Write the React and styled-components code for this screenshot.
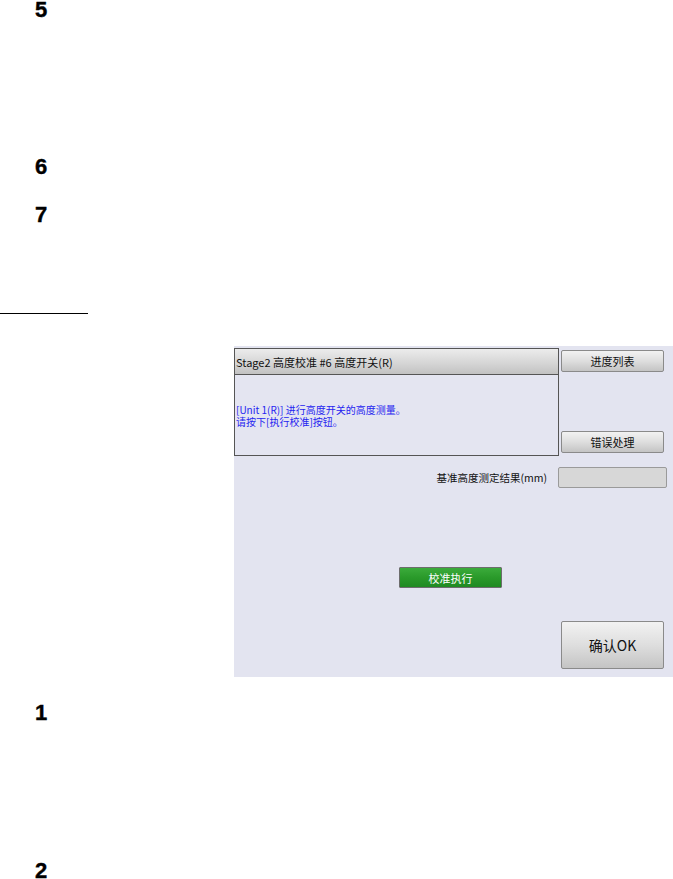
import React from 'react'
import styled, { createGlobalStyle } from 'styled-components';

const GlobalStyle = createGlobalStyle`
    html, body {
        margin: 0;
        padding: 0;
        background: #ffffff;
    }
`;

const Page = styled.div`
    width: 673px;
    display: flex;
    flex-direction: column;
    & > * {
        flex-shrink: 0;
    }
`;

const StepNumber = styled.div`
    height: 16px;
    line-height: 16px;
    padding-left: 35px;
    margin-top: ${props => props.gap}px;
    font-family: "Liberation Sans", Arial, sans-serif;
    font-weight: bold;
    font-size: 22px;
    -webkit-text-stroke: 0.4px #000;
    color: #000;
`;

const Rule = styled.div`
    width: 88px;
    height: 1px;
    margin-top: 90px;
    background: #000;
`;

const Panel = styled.div`
    margin-top: 32px;
    margin-left: 234px;
    width: 439px;
    height: 331px;
    box-sizing: border-box;
    padding-top: 2px;
    background: #e3e4f0;
    display: flex;
    flex-direction: column;
    font-family: "Noto Sans CJK SC", "Liberation Sans", sans-serif;
`;

const TopRow = styled.div`
    display: flex;
    align-items: flex-start;
    gap: 2px;
`;

const InfoBox = styled.div`
    width: 325px;
    border: 1px solid #555;
    box-sizing: border-box;
    display: flex;
    flex-direction: column;
`;

const TitleBar = styled.div`
    height: 26px;
    box-sizing: border-box;
    border-bottom: 1px solid #555;
    background: linear-gradient(#ececec, #d4d4d4 60%, #c2c2c2);
    display: flex;
    align-items: center;
    padding-left: 1px;
    font-size: 11px;
    color: #111;
    white-space: nowrap;
`;

const Message = styled.div`
    height: 80px;
    display: flex;
    flex-direction: column;
    justify-content: center;
    padding-left: 1px;
    padding-top: 1px;
    box-sizing: border-box;
    font-size: 10px;
    line-height: 12px;
    color: #2424f0;
    background: #e4e5f1;
`;

const SideColumn = styled.div`
    display: flex;
    flex-direction: column;
    gap: 59px;
    padding-top: 2px;
`;

const GreyButton = styled.div`
    width: 103px;
    height: ${props => props.tall ? 48 : 22}px;
    box-sizing: border-box;
    border: 1px solid #8a8a8a;
    border-radius: 2px;
    background: linear-gradient(#f2f2f2, #dedede 50%, #c4c4c4);
    display: flex;
    align-items: center;
    justify-content: center;
    font-size: ${props => props.tall ? 14 : 11}px;
    color: #111;
    user-select: none;
`;

const MeasureRow = styled.div`
    margin-top: 11px;
    height: 21px;
    display: flex;
    align-items: center;
    justify-content: flex-end;
    gap: 11px;
    padding-right: 6px;
`;

const Label = styled.span`
    font-size: 10.5px;
    color: #111;
    white-space: nowrap;
`;

const ResultField = styled.div`
    width: 109px;
    height: 21px;
    box-sizing: border-box;
    border: 1px solid #9a9a9a;
    border-radius: 2px;
    background: #d7d7d7;
`;

const RunButton = styled.div`
    margin-top: 79px;
    margin-left: 165px;
    width: 103px;
    height: 21px;
    box-sizing: border-box;
    border: 1px solid #6d6d6d;
    border-radius: 1px;
    background: linear-gradient(#3bab3b, #2a9a2a 50%, #1f8a22);
    display: flex;
    align-items: center;
    justify-content: center;
    font-size: 11px;
    color: #ffffff;
`;

const OkRow = styled.div`
    margin-top: 33px;
    display: flex;
    justify-content: flex-end;
    padding-right: 9px;
`;

function App() {
    return (
        <>
            <GlobalStyle/>
            <Page>
                <StepNumber gap={2}>5</StepNumber>
                <StepNumber gap={141}>6</StepNumber>
                <StepNumber gap={32}>7</StepNumber>
                <Rule/>

                <Panel>
                    <TopRow>
                        <InfoBox>
                            <TitleBar>Stage2 高度校准 #6 高度开关(R)</TitleBar>
                            <Message>
                                <div>[Unit 1(R)] 进行高度开关的高度测量。</div>
                                <div>请按下[执行校准]按钮。</div>
                            </Message>
                        </InfoBox>
                        <SideColumn>
                            <GreyButton>进度列表</GreyButton>
                            <GreyButton>错误处理</GreyButton>
                        </SideColumn>
                    </TopRow>

                    <MeasureRow>
                        <Label>基准高度测定结果(mm)</Label>
                        <ResultField/>
                    </MeasureRow>

                    <RunButton>校准执行</RunButton>

                    <OkRow>
                        <GreyButton tall>确认OK</GreyButton>
                    </OkRow>
                </Panel>

                <StepNumber gap={28}>1</StepNumber>
                <StepNumber gap={142}>2</StepNumber>
            </Page>
        </>
    )
}

export default App;
